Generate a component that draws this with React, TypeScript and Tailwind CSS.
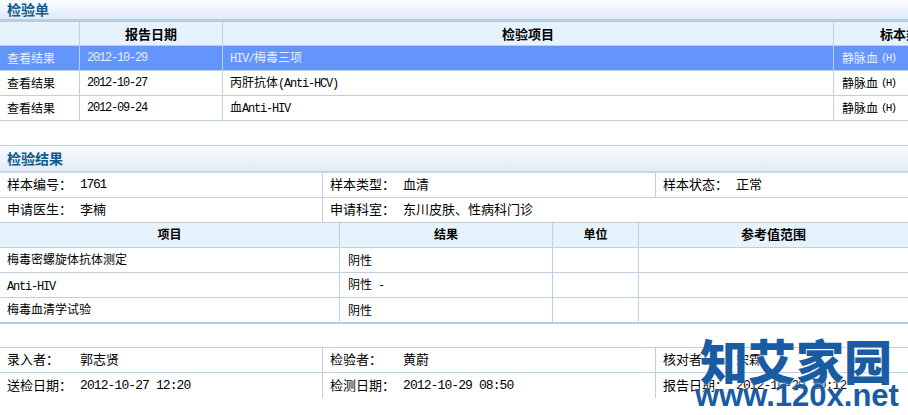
const cjk = "font-['Noto_Sans_CJK_SC','Liberation_Sans',sans-serif]";

function Mono({ children, className = 'text-[12px] tracking-[-1.2px]' }: { children: React.ReactNode; className?: string }) {
  return <span className={`font-['Liberation_Mono',monospace] whitespace-pre ${className}`}>{children}</span>;
}

function Title({ text, className }: { text: string; className: string }) {
  return (
    <div className={`flex items-center pl-[7px] bg-gradient-to-b from-[#fbfdfe] to-[#dfebf8] text-[14px] font-bold text-[#0f5a8c] ${className}`}>
      {text}
    </div>
  );
}

function Cell({ w, children, className = '' }: { w: string; children?: React.ReactNode; className?: string }) {
  return <div className={`flex items-center shrink-0 h-full overflow-hidden whitespace-nowrap ${w} ${className}`}>{children}</div>;
}

const orderRows = [
  { date: '2012-10-29', item: <><Mono>HIV/</Mono>梅毒三项</>, active: true },
  { date: '2012-10-27', item: <>丙肝抗体<Mono>(Anti-HCV)</Mono></>, active: false },
  { date: '2012-09-24', item: <>血<Mono>Anti-HIV</Mono></>, active: false },
];

const resultRows = [
  { name: <>梅毒密螺旋体抗体测定</>, value: <>阴性</> },
  { name: <Mono className="text-[12px] tracking-[-1.2px] pt-[4px]">Anti-HIV</Mono>, value: <>阴性<Mono className="ml-[6px] text-[12px]">-</Mono></> },
  { name: <>梅毒血清学试验</>, value: <>阴性</> },
];

function OrderTable() {
  return (
    <div>
      <Title text="检验单" className="h-[19px]" />
      <div className="flex h-[27px] border-t-[3px] border-b border-t-[#b9ccdc] border-b-[#bcd0dd] bg-[#e6f3fc] text-[13px] font-bold text-black">
        <Cell w="w-[80px]" className="border-r border-[#bcd0dd]" />
        <Cell w="w-[143px]" className="justify-center border-r border-[#bcd0dd]">报告日期</Cell>
        <Cell w="w-[611px]" className="justify-center border-r border-[#bcd0dd]">检验项目</Cell>
        <Cell w="w-[144px]" className="justify-center">标本类型</Cell>
      </div>
      {orderRows.map((r) => (
        <div key={r.date} className={`flex h-[25px] border-b border-[#bcd0dd] text-[12px] ${r.active ? 'bg-[#6495fd] text-[#e6eeff]' : 'bg-white text-black'}`}>
          <Cell w="w-[80px]" className="pl-[7px] border-r border-[#bcd0dd]">查看结果</Cell>
          <Cell w="w-[143px]" className="pl-[7px] border-r border-[#bcd0dd]"><Mono>{r.date}</Mono></Cell>
          <Cell w="w-[611px]" className="pl-[7px] border-r border-[#bcd0dd]"><span>{r.item}</span></Cell>
          <Cell w="w-[74px]" className="pl-[8px]">静脉血<Mono className="ml-[3px] text-[11px] tracking-[-1.8px]">(H)</Mono></Cell>
        </div>
      ))}
    </div>
  );
}

function InfoRow({ cells, widths, last = false }: { cells: [string, React.ReactNode][]; widths: string[]; last?: boolean }) {
  return (
    <div className={`flex h-[25px] ${last ? '' : 'border-b border-[#bcd0dd]'} text-[13px] text-black`}>
      {cells.map(([label, value], i) => (
        <Cell key={label} w={widths[i]} className={`pb-[2px] ${i < widths.length - 1 ? 'border-r border-[#bcd0dd]' : ''}`}>
          <span className="w-[80px] pl-[7px] shrink-0">{label}</span>
          <span>{value}</span>
        </Cell>
      ))}
    </div>
  );
}

const threeCols = ['w-[323px]', 'w-[333px]', 'w-[252px]'];

function ResultTable() {
  return (
    <div className="mt-[24px] border-t border-[#bcd0dd]">
      <Title text="检验结果" className="h-[27px] border-b-2 border-[#c6d6e2]" />
      <InfoRow widths={threeCols} cells={[['样本编号：', <Mono className="text-[13px] tracking-[-1.3px]">1761</Mono>], ['样本类型：', '血清'], ['样本状态：', '正常']]} />
      <InfoRow widths={['w-[323px]', 'w-[585px]']} cells={[['申请医生：', '李楠'], ['申请科室：', '东川皮肤、性病科门诊']]} />
      <div className="flex h-[25px] border-b border-[#bcd0dd] bg-[#e6f3fc] text-[12px] font-bold text-black">
        <Cell w="w-[340px]" className="justify-center pb-[2px] border-r border-[#bcd0dd]">项目</Cell>
        <Cell w="w-[213px]" className="justify-center pb-[2px] border-r border-[#bcd0dd]">结果</Cell>
        <Cell w="w-[86px]" className="justify-center pb-[2px] border-r border-[#bcd0dd]">单位</Cell>
        <Cell w="w-[269px]" className="justify-center pb-[2px] text-[13px]">参考值范围</Cell>
      </div>
      {resultRows.map((r, i) => (
        <div key={i} className={`flex text-[12px] text-black ${i === 2 ? 'h-[26px] border-b-2 border-[#b9ccdf]' : 'h-[25px] border-b border-[#bcd0dd]'}`}>
          <Cell w="w-[340px]" className={`pl-[7px] border-r border-[#bcd0dd] ${i === 1 ? '' : 'pb-[2px]'}`}>{r.name}</Cell>
          <Cell w="w-[213px]" className="pl-[8px] border-r border-[#bcd0dd]"><span>{r.value}</span></Cell>
          <Cell w="w-[86px]" className="border-r border-[#bcd0dd]" />
          <Cell w="w-[269px]" />
        </div>
      ))}
    </div>
  );
}

function FooterTable() {
  const date = 'text-[13px] tracking-[-0.9px]';
  return (
    <div className="mt-[23px] border-t border-[#bcd0dd]">
      <InfoRow widths={threeCols} cells={[['录入者：', '郭志贤'], ['检验者：', '黄蔚'], ['核对者：', '宋霖']]} />
      <InfoRow
        widths={threeCols}
        last
        cells={[
          ['送检日期：', <Mono className={date}>2012-10-27 12:20</Mono>],
          ['检测日期：', <Mono className={date}>2012-10-29 08:50</Mono>],
          ['报告日期：', <Mono className={date}>2012-10-29 10:12</Mono>],
        ]}
      />
    </div>
  );
}

export default function App() {
  return (
    <div className={`relative w-[908px] h-[415px] overflow-hidden bg-white ${cjk}`}>
      <OrderTable />
      <ResultTable />
      <FooterTable />
      {/* 水印 */}
      <div className="absolute left-[695px] top-[331px] w-[213px] text-[#1a5ca3] [text-shadow:0_0_3px_#ffffff]">
        <div className="text-[48px] leading-[56px] font-black whitespace-nowrap pl-[5px]">知艾家园</div>
        <div className="font-['Liberation_Sans',sans-serif] text-[31px] leading-[18px] font-bold whitespace-nowrap">www.120x.net</div>
      </div>
    </div>
  );
}
